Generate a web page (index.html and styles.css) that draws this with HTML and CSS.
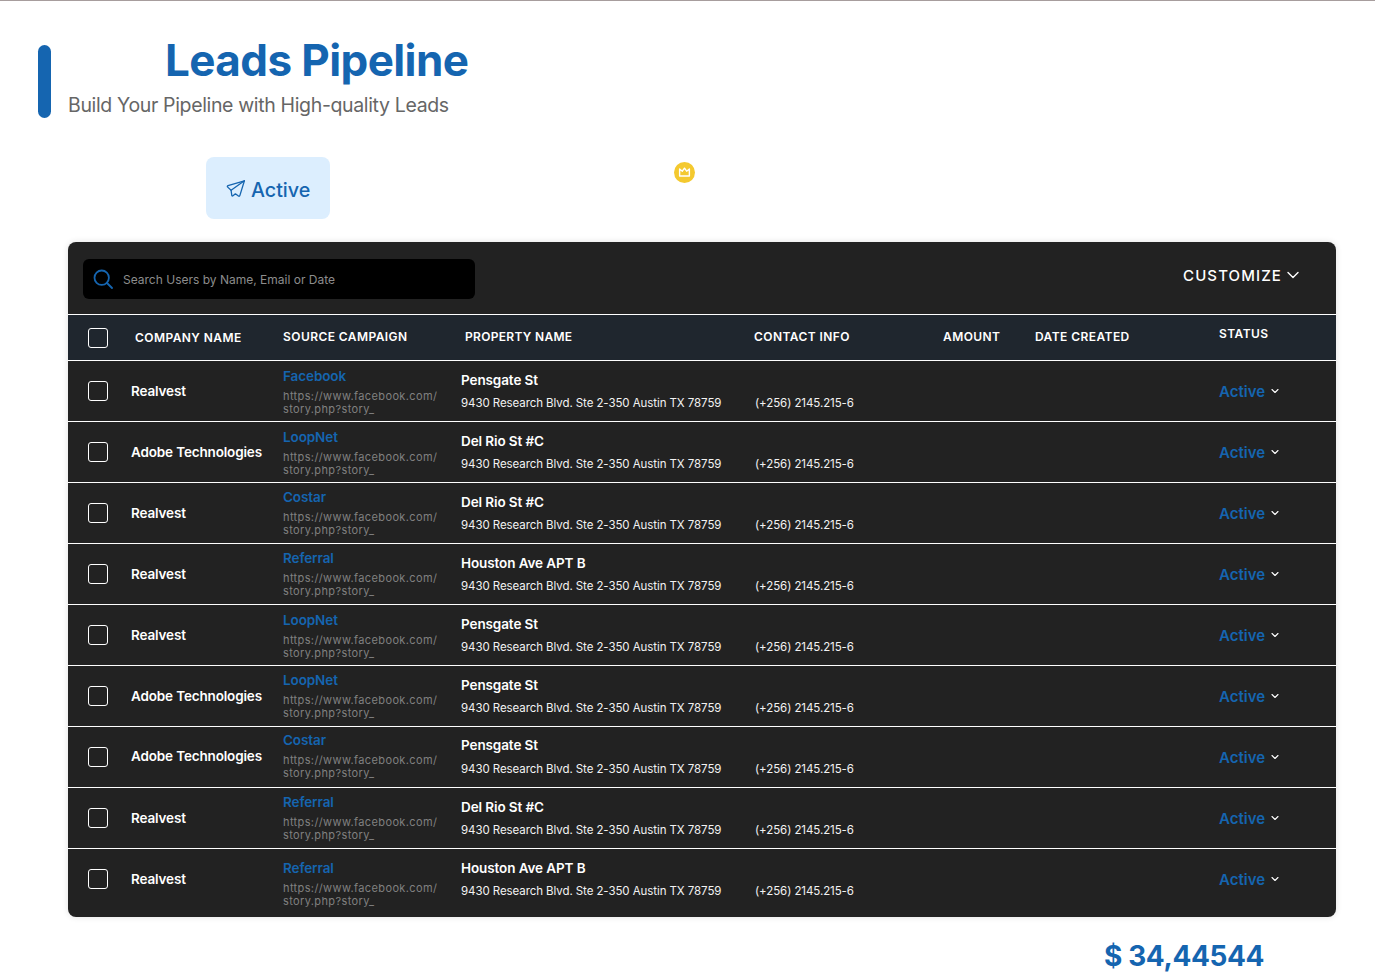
FILE: index.html
```html
<!DOCTYPE html>
<html lang="en">
<head>
<meta charset="utf-8">
<title>Leads Pipeline</title>
<link rel="stylesheet" href="styles.css">
</head>
<body>
<div class="topline"></div>
<header class="head">
  <div class="bar"></div>
  <div class="head-text">
    <h1 class="title">Leads Pipeline</h1>
    <p class="subtitle">Build Your Pipeline with High-quality Leads</p>
  </div>
</header>
<div class="tabs">
  <button class="tab">
    <svg class="tab-icon" viewBox="0 0 20 20" fill="none" stroke="currentColor" stroke-width="1.3" stroke-linejoin="round" stroke-linecap="round"><path d="M18.4 1.8 2 6.6c-.8.3-.9 1-.3 1.5l3.4 3.2.7 5c.1.7.6.9 1.2.5l2.4-2 3 2.2c.7.5 1.3.2 1.5-.6z"/><path d="M18.4 1.8 5.1 11.3"/></svg>
    <span>Active</span>
  </button>
  <span class="crown">
    <svg viewBox="0 0 12 12" fill="none" stroke="#fff" stroke-width="1.3" stroke-linejoin="round"><path d="M1.5 2.8 4 4.8 6 2l2 2.8 2.5-2v6.4h-9z"/></svg>
  </span>
</div>
<section class="card">
  <div class="toolbar">
    <div class="search">
      <svg class="search-icon" viewBox="0 0 20 20" fill="none" stroke="#1565b0" stroke-width="1.8" stroke-linecap="round"><circle cx="8.7" cy="8.7" r="7.2"/><path d="m14 14 5 5"/></svg>
      <span>Search Users by Name, Email or Date</span>
    </div>
    <div class="customize">
      <span>CUSTOMIZE</span>
      <svg class="customize-chev" viewBox="0 0 12 8" fill="none" stroke="#fff" stroke-width="1.4" stroke-linecap="round" stroke-linejoin="round"><path d="m1 1.5 5 5 5-5"/></svg>
    </div>
  </div>
  <div class="thead">
    <span class="box"></span>
    <span class="th th-company">COMPANY NAME</span>
    <span class="th">SOURCE CAMPAIGN</span>
    <span class="th th-property">PROPERTY NAME</span>
    <span class="th">CONTACT INFO</span>
    <span class="th">AMOUNT</span>
    <span class="th">DATE CREATED</span>
    <span class="th th-status">STATUS</span>
  </div>

  <div class="row">
    <span class="box"></span><span class="company">Realvest</span>
    <div class="source"><a class="link">Facebook</a><p class="url">https://www.facebook.com/<br>story.php?story_</p></div>
    <div class="prop"><p class="prop-name">Pensgate St</p><p class="small">9430 Research Blvd. Ste 2-350 Austin TX 78759</p></div>
    <p class="small phone">(+256) 2145.215-6</p>
    <div class="status"><span>Active</span><svg class="chev" viewBox="0 0 8 6" fill="none" stroke="#fff" stroke-width="1.1" stroke-linecap="round" stroke-linejoin="round"><path d="m1 1.5 3 3 3-3"/></svg></div>
  </div>
  <div class="row">
    <span class="box"></span><span class="company">Adobe Technologies</span>
    <div class="source"><a class="link">LoopNet</a><p class="url">https://www.facebook.com/<br>story.php?story_</p></div>
    <div class="prop"><p class="prop-name">Del Rio St #C</p><p class="small">9430 Research Blvd. Ste 2-350 Austin TX 78759</p></div>
    <p class="small phone">(+256) 2145.215-6</p>
    <div class="status"><span>Active</span><svg class="chev" viewBox="0 0 8 6" fill="none" stroke="#fff" stroke-width="1.1" stroke-linecap="round" stroke-linejoin="round"><path d="m1 1.5 3 3 3-3"/></svg></div>
  </div>
  <div class="row">
    <span class="box"></span><span class="company">Realvest</span>
    <div class="source source-up"><a class="link">Costar</a><p class="url">https://www.facebook.com/<br>story.php?story_</p></div>
    <div class="prop"><p class="prop-name">Del Rio St #C</p><p class="small">9430 Research Blvd. Ste 2-350 Austin TX 78759</p></div>
    <p class="small phone">(+256) 2145.215-6</p>
    <div class="status"><span>Active</span><svg class="chev" viewBox="0 0 8 6" fill="none" stroke="#fff" stroke-width="1.1" stroke-linecap="round" stroke-linejoin="round"><path d="m1 1.5 3 3 3-3"/></svg></div>
  </div>
  <div class="row">
    <span class="box"></span><span class="company">Realvest</span>
    <div class="source source-up"><a class="link">Referral</a><p class="url">https://www.facebook.com/<br>story.php?story_</p></div>
    <div class="prop"><p class="prop-name">Houston Ave APT B</p><p class="small">9430 Research Blvd. Ste 2-350 Austin TX 78759</p></div>
    <p class="small phone">(+256) 2145.215-6</p>
    <div class="status"><span>Active</span><svg class="chev" viewBox="0 0 8 6" fill="none" stroke="#fff" stroke-width="1.1" stroke-linecap="round" stroke-linejoin="round"><path d="m1 1.5 3 3 3-3"/></svg></div>
  </div>
  <div class="row">
    <span class="box"></span><span class="company">Realvest</span>
    <div class="source"><a class="link">LoopNet</a><p class="url">https://www.facebook.com/<br>story.php?story_</p></div>
    <div class="prop"><p class="prop-name">Pensgate St</p><p class="small">9430 Research Blvd. Ste 2-350 Austin TX 78759</p></div>
    <p class="small phone">(+256) 2145.215-6</p>
    <div class="status"><span>Active</span><svg class="chev" viewBox="0 0 8 6" fill="none" stroke="#fff" stroke-width="1.1" stroke-linecap="round" stroke-linejoin="round"><path d="m1 1.5 3 3 3-3"/></svg></div>
  </div>
  <div class="row">
    <span class="box"></span><span class="company">Adobe Technologies</span>
    <div class="source source-up"><a class="link">LoopNet</a><p class="url">https://www.facebook.com/<br>story.php?story_</p></div>
    <div class="prop"><p class="prop-name">Pensgate St</p><p class="small">9430 Research Blvd. Ste 2-350 Austin TX 78759</p></div>
    <p class="small phone">(+256) 2145.215-6</p>
    <div class="status"><span>Active</span><svg class="chev" viewBox="0 0 8 6" fill="none" stroke="#fff" stroke-width="1.1" stroke-linecap="round" stroke-linejoin="round"><path d="m1 1.5 3 3 3-3"/></svg></div>
  </div>
  <div class="row row-high">
    <span class="box"></span><span class="company">Adobe Technologies</span>
    <div class="source source-up2"><a class="link">Costar</a><p class="url">https://www.facebook.com/<br>story.php?story_</p></div>
    <div class="prop"><p class="prop-name">Pensgate St</p><p class="small">9430 Research Blvd. Ste 2-350 Austin TX 78759</p></div>
    <p class="small phone">(+256) 2145.215-6</p>
    <div class="status"><span>Active</span><svg class="chev" viewBox="0 0 8 6" fill="none" stroke="#fff" stroke-width="1.1" stroke-linecap="round" stroke-linejoin="round"><path d="m1 1.5 3 3 3-3"/></svg></div>
  </div>
  <div class="row">
    <span class="box"></span><span class="company">Realvest</span>
    <div class="source source-up"><a class="link">Referral</a><p class="url">https://www.facebook.com/<br>story.php?story_</p></div>
    <div class="prop"><p class="prop-name">Del Rio St #C</p><p class="small">9430 Research Blvd. Ste 2-350 Austin TX 78759</p></div>
    <p class="small phone">(+256) 2145.215-6</p>
    <div class="status"><span>Active</span><svg class="chev" viewBox="0 0 8 6" fill="none" stroke="#fff" stroke-width="1.1" stroke-linecap="round" stroke-linejoin="round"><path d="m1 1.5 3 3 3-3"/></svg></div>
  </div>
  <div class="row row-last">
    <span class="box"></span><span class="company">Realvest</span>
    <div class="source source-down"><a class="link">Referral</a><p class="url">https://www.facebook.com/<br>story.php?story_</p></div>
    <div class="prop"><p class="prop-name">Houston Ave APT B</p><p class="small">9430 Research Blvd. Ste 2-350 Austin TX 78759</p></div>
    <p class="small phone">(+256) 2145.215-6</p>
    <div class="status"><span>Active</span><svg class="chev" viewBox="0 0 8 6" fill="none" stroke="#fff" stroke-width="1.1" stroke-linecap="round" stroke-linejoin="round"><path d="m1 1.5 3 3 3-3"/></svg></div>
  </div>
</section>
<div class="total">$ 34,44544</div>
</body>
</html>
```
FILE: styles.css
```css
* { box-sizing: border-box; }
html, body { margin: 0; padding: 0; }
body {
  background: #fff;
  font-family: Inter, "Noto Sans", sans-serif;
  height: 973px;
  overflow: hidden;
}
p, h1 { margin: 0; }

.topline { height: 1px; background: #a79d9d; }

.head {
  display: flex;
  gap: 17px;
  padding: 44px 0 0 38px;
  height: 133px;
}
.bar { width: 13px; height: 73px; border-radius: 7px; background: #1565b0; }
.title {
  padding-left: 97px;
  margin-top: -1px;
  font-size: 44px;
  line-height: 33px;
  font-weight: 650;
  letter-spacing: -0.6px;
  color: #1565b0;
}
.subtitle {
  margin-top: 16px;
  font-size: 19.5px;
  line-height: 24px;
  letter-spacing: -0.35px;
  color: #666;
}

.tabs {
  display: flex;
  align-items: flex-start;
  padding: 23px 0 0 206px;
  height: 108px;
}
.tab {
  display: flex;
  align-items: center;
  gap: 5px;
  width: 124px;
  height: 62px;
  padding: 4px 0 0 20px;
  border: 0;
  border-radius: 8px;
  background: #dceefe;
  color: #1565b0;
  font-family: inherit;
  font-size: 19.7px;
  font-weight: 500;
}
.tab-icon { width: 20px; height: 20px; flex: none; margin-top: -2px; }
.crown {
  display: flex;
  align-items: center;
  justify-content: center;
  width: 21px;
  height: 21px;
  margin: 5px 0 0 344px;
  border-radius: 50%;
  background: #f4c92f;
}
.crown svg { width: 13px; height: 13px; }

.card {
  margin: 0 39px 0 68px;
  height: 675px;
  border-radius: 8px;
  overflow: hidden;
  background: #222;
  box-shadow: 0 0 6px rgba(0,0,0,.12);
  color: #fff;
}
.toolbar {
  display: flex;
  align-items: flex-start;
  justify-content: space-between;
  height: 72px;
  padding: 17px 37px 0 15px;
}
.search {
  display: flex;
  align-items: center;
  gap: 10px;
  width: 392px;
  height: 40px;
  padding-left: 10px;
  border-radius: 6px;
  background: #000;
  color: #8c8c8c;
  font-size: 12px;
}
.search-icon { width: 20px; height: 20px; flex: none; }
.customize {
  display: flex;
  align-items: center;
  gap: 5px;
  height: 32px;
  font-size: 15px;
  font-weight: 500;
  letter-spacing: 1.1px;
}
.customize-chev { width: 12px; height: 8px; }

.box {
  display: block;
  width: 20px;
  height: 20px;
  margin-left: 20px;
  border: 1.5px solid #fff;
  border-radius: 3px;
}
.thead {
  display: grid;
  grid-template-columns: 67px 148px 182px 289px 189px 92px 184px 1fr;
  align-items: center;
  height: 47px;
  border-top: 1px solid #fff;
  border-bottom: 1px solid #fff;
  background: #1f262e;
}
.th {
  padding-bottom: 2px;
  font-size: 12px;
  font-weight: 600;
  letter-spacing: .43px;
}
.th-status { margin-top: -6px; }
.th-company { margin-top: 1px; }
.th-property { letter-spacing: .3px; }

.row {
  display: grid;
  grid-template-columns: 63px 152px 178px 294px 464px 1fr;
  grid-auto-rows: 60px;
  align-items: center;
  height: 61px;
  border-bottom: 1px solid #fff;
}
.row-last { height: 68px; border-bottom: 0; }
.company {
  font-size: 13.5px;
  font-weight: 600;
  letter-spacing: -0.15px;
}
.source { padding-top: 2px; }
.source-up { padding-bottom: 2px; }
.source-up2 { padding-bottom: 4px; }
.source-down { padding-top: 10px; }
.link {
  display: block;
  font-size: 13.5px;
  line-height: 17px;
  font-weight: 600;
  letter-spacing: -0.1px;
  color: #1565b0;
}
.url {
  margin-top: 5px;
  font-size: 11px;
  line-height: 13px;
  letter-spacing: .38px;
  color: #808080;
}
.prop-name {
  margin-bottom: 6px;
  font-size: 13.5px;
  line-height: 17px;
  font-weight: 600;
  letter-spacing: -0.1px;
}
.row-high .company { padding-bottom: 2px; }
.row-high .prop { padding-bottom: 1px; }
.row-high .prop-name { margin-bottom: 7px; }
.small { font-size: 11.5px; line-height: 16px; letter-spacing: -0.08px; color: #f2f2f2; }
.phone { margin-top: 24px; }
.status {
  display: flex;
  align-items: center;
  gap: 6px;
  color: #1565b0;
  font-size: 15px;
  font-weight: 600;
}
.chev { width: 8px; height: 6px; }

.total {
  margin: 21px 0 0 1104px;
  font-size: 28px;
  line-height: 36px;
  font-weight: 700;
  letter-spacing: -0.4px;
  color: #1565b0;
}
```
